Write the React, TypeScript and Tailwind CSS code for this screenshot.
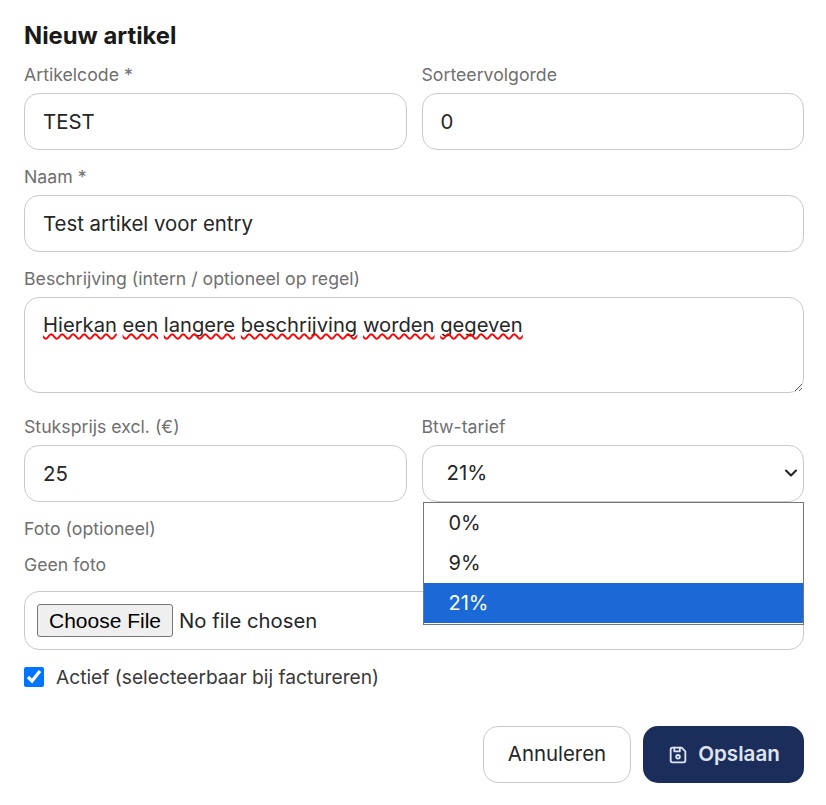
import React from 'react';
import { ChevronDown } from 'lucide-react';
import { TbDeviceFloppy } from 'react-icons/tb';

const labelClass = 'block h-[20px] leading-[20px] text-[17.7px] text-[#6f6f6f] mb-[8px]';
const fieldClass = 'block w-full h-[57px] px-[18px] text-[20.4px] text-[#262626] bg-white border border-[#c9c9c9] rounded-[15px] outline-none';

const words = ['Hierkan', 'een', 'langere', 'beschrijving', 'worden', 'gegeven'];

const App: React.FC = () => {
    return (
        <div className="w-[826px] h-[805px] bg-white px-[24px] pt-[21px] font-['Inter',sans-serif] text-[#262626] overflow-hidden">
            <h2 className="text-[23.8px] leading-[30px] font-bold text-[#1a1a1a] mb-[14px]">Nieuw artikel</h2>

            <div className="w-[780px] grid grid-cols-2 gap-x-[15px]">
                <div>
                    <label className={labelClass}>Artikelcode *</label>
                    <input className={fieldClass} defaultValue="TEST" />
                </div>
                <div>
                    <label className={labelClass}>Sorteervolgorde</label>
                    <input className={fieldClass} defaultValue="0" />
                </div>
            </div>

            <div className="w-[780px] mt-[17px]">
                <label className={labelClass}>Naam *</label>
                <input className={fieldClass} defaultValue="Test artikel voor entry" />
            </div>

            <div className="w-[780px] mt-[17px]">
                <label className={labelClass}>Beschrijving (intern / optioneel op regel)</label>
                <div className="relative h-[96px]">
                    <textarea
                        className="block w-full h-[96px] px-[18px] py-[12px] text-[20.2px] leading-[30px] text-[#262626] bg-white border border-[#c9c9c9] rounded-[15px] outline-none resize-y"
                        spellCheck={false}
                        defaultValue={words.join(' ')}
                    />
                    {/* spellcheck squiggles sit over the textarea text */}
                    <div className="absolute left-[19px] top-[13px] text-[20.2px] leading-[30px] text-transparent pointer-events-none whitespace-pre">
                        {words.map((word, i) => (
                            <React.Fragment key={word}>
                                <span className="underline decoration-wavy decoration-[#ff0000] decoration-[1.5px] underline-offset-[1px] [text-decoration-skip-ink:none]">{word}</span>
                                {i < words.length - 1 ? ' ' : ''}
                            </React.Fragment>
                        ))}
                    </div>
                </div>
            </div>

            <div className="w-[780px] grid grid-cols-2 gap-x-[15px] mt-[24px]">
                <div>
                    <label className={labelClass}>Stuksprijs excl. (€)</label>
                    <input className={fieldClass} defaultValue="25" />
                </div>
                <div className="relative">
                    <label className={labelClass}>Btw-tarief</label>
                    <select className={`${fieldClass} appearance-none pl-[24px]`} defaultValue="21%">
                        <option>0%</option>
                        <option>9%</option>
                        <option>21%</option>
                    </select>
                    <ChevronDown className="absolute right-[3px] top-[46px] w-[20px] h-[20px] text-[#222222] pointer-events-none" strokeWidth={2.5} />
                    <div className="absolute z-10 left-[1px] right-0 top-[85px] h-[123px] bg-white border border-[#767676] text-[20px] text-[#262626]">
                        <div className="h-[40px] leading-[40px] pl-[25px]">0%</div>
                        <div className="h-[40px] leading-[40px] pl-[25px]">9%</div>
                        <div className="h-[40px] leading-[40px] pl-[25px] bg-[#1a69d6] text-white">21%</div>
                    </div>
                </div>
            </div>

            <div className="w-[780px] mt-[17px]">
                <label className={labelClass}>Foto (optioneel)</label>
                <div className="h-[20px] leading-[20px] text-[17.7px] text-[#6f6f6f] mt-[16px] mb-[16px]">Geen foto</div>
                <div className="h-[59px] flex items-center px-[12px] border border-[#c9c9c9] rounded-[15px]">
                    <input
                        type="file"
                        className="text-[20.3px] text-[#262626] file:font-['Liberation_Sans',sans-serif] file:text-[21px] file:text-black file:w-[136px] file:h-[33px] file:mr-[6px] file:bg-[#efefef] file:border file:border-solid file:border-[#767676] file:rounded-[3px]"
                    />
                </div>
            </div>

            <div className="flex items-center mt-[17px] h-[20px]">
                <input type="checkbox" defaultChecked className="w-[20px] h-[20px] m-0" />
                <span className="ml-[12px] text-[19.2px] text-[#3a3a3a]">Actief (selecteerbaar bij factureren)</span>
            </div>

            <div className="w-[780px] flex justify-end gap-[12px] mt-[39px]">
                <button className="w-[148px] h-[57px] text-[20.4px] font-normal text-[#262626] bg-white border border-[#c9c9c9] rounded-[15px]">
                    Annuleren
                </button>
                <button className="w-[161px] h-[57px] flex items-center justify-center gap-[9px] text-[20.6px] font-semibold text-[#dfe3ee] bg-[#1b2d5b] rounded-[15px]">
                    <TbDeviceFloppy className="w-[22px] h-[22px]" />
                    Opslaan
                </button>
            </div>
        </div>
    );
};

export default App;
